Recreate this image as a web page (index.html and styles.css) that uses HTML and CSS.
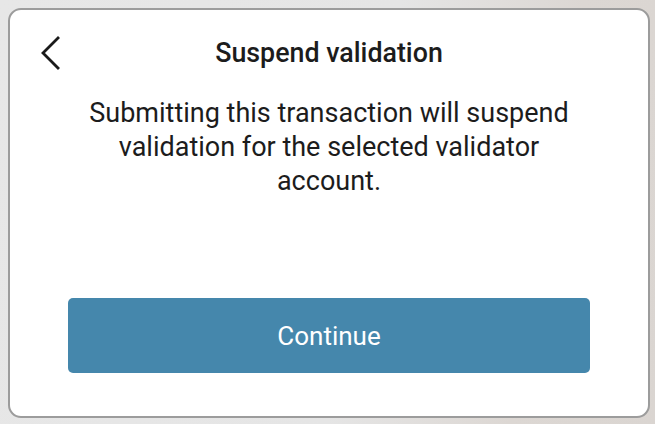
FILE: index.html
```html
<!DOCTYPE html>
<html>
<head>
<meta charset="utf-8">
<link rel="stylesheet" href="styles.css">
</head>
<body>
<div class="card">
  <div class="header">
    <button class="back" aria-label="Back">
      <svg width="24" height="34" viewBox="0 0 24 34"><path d="M18 2 L3 17 L18 32" fill="none" stroke="#1a1a1a" stroke-width="2.8" stroke-linecap="square" stroke-linejoin="miter"/></svg>
    </button>
    <h1 class="title">Suspend validation</h1>
  </div>
  <p class="message">Submitting this transaction will suspend validation for the selected validator account.</p>
  <button class="continue">Continue</button>
</div>
</body>
</html>
```
FILE: styles.css
```css
html, body {
  margin: 0;
  padding: 0;
  height: 100%;
}
body {
  background: linear-gradient(100deg, #e7e7e7 0%, #e5e5e5 55%, #dcd7d3 80%, #dad5d1 100%);
  font-family: Roboto, "Noto Sans", sans-serif;
  color: #1c1c1c;
  padding: 8px 6px 7px 8px;
  box-sizing: border-box;
}
.card {
  box-sizing: border-box;
  width: 642px;
  height: 410px;
  background: #fff;
  border: 2px solid #9c9c9c;
  border-radius: 13px;
  padding: 21px 58px 43px 58px;
  display: flex;
  flex-direction: column;
}
.header {
  position: relative;
  height: 44px;
  display: flex;
  align-items: center;
  justify-content: center;
}
.back {
  position: absolute;
  left: -28px;
  top: 5px;
  background: none;
  border: none;
  padding: 0;
  margin: 0;
  display: flex;
  cursor: pointer;
}
.title {
  margin: 0;
  font-size: 26.8px;
  font-weight: 500;
  line-height: 44px;
}
.message {
  margin: 21px 0 0 0;
  padding: 0 14px;
  font-size: 27px;
  line-height: 34px;
  text-align: center;
}
.continue {
  margin-top: auto;
  height: 75px;
  width: 100%;
  border: none;
  border-radius: 5px;
  background: #4587ac;
  color: #fff;
  font-family: Roboto, "Noto Sans", sans-serif;
  font-size: 26px;
  cursor: pointer;
}
```
